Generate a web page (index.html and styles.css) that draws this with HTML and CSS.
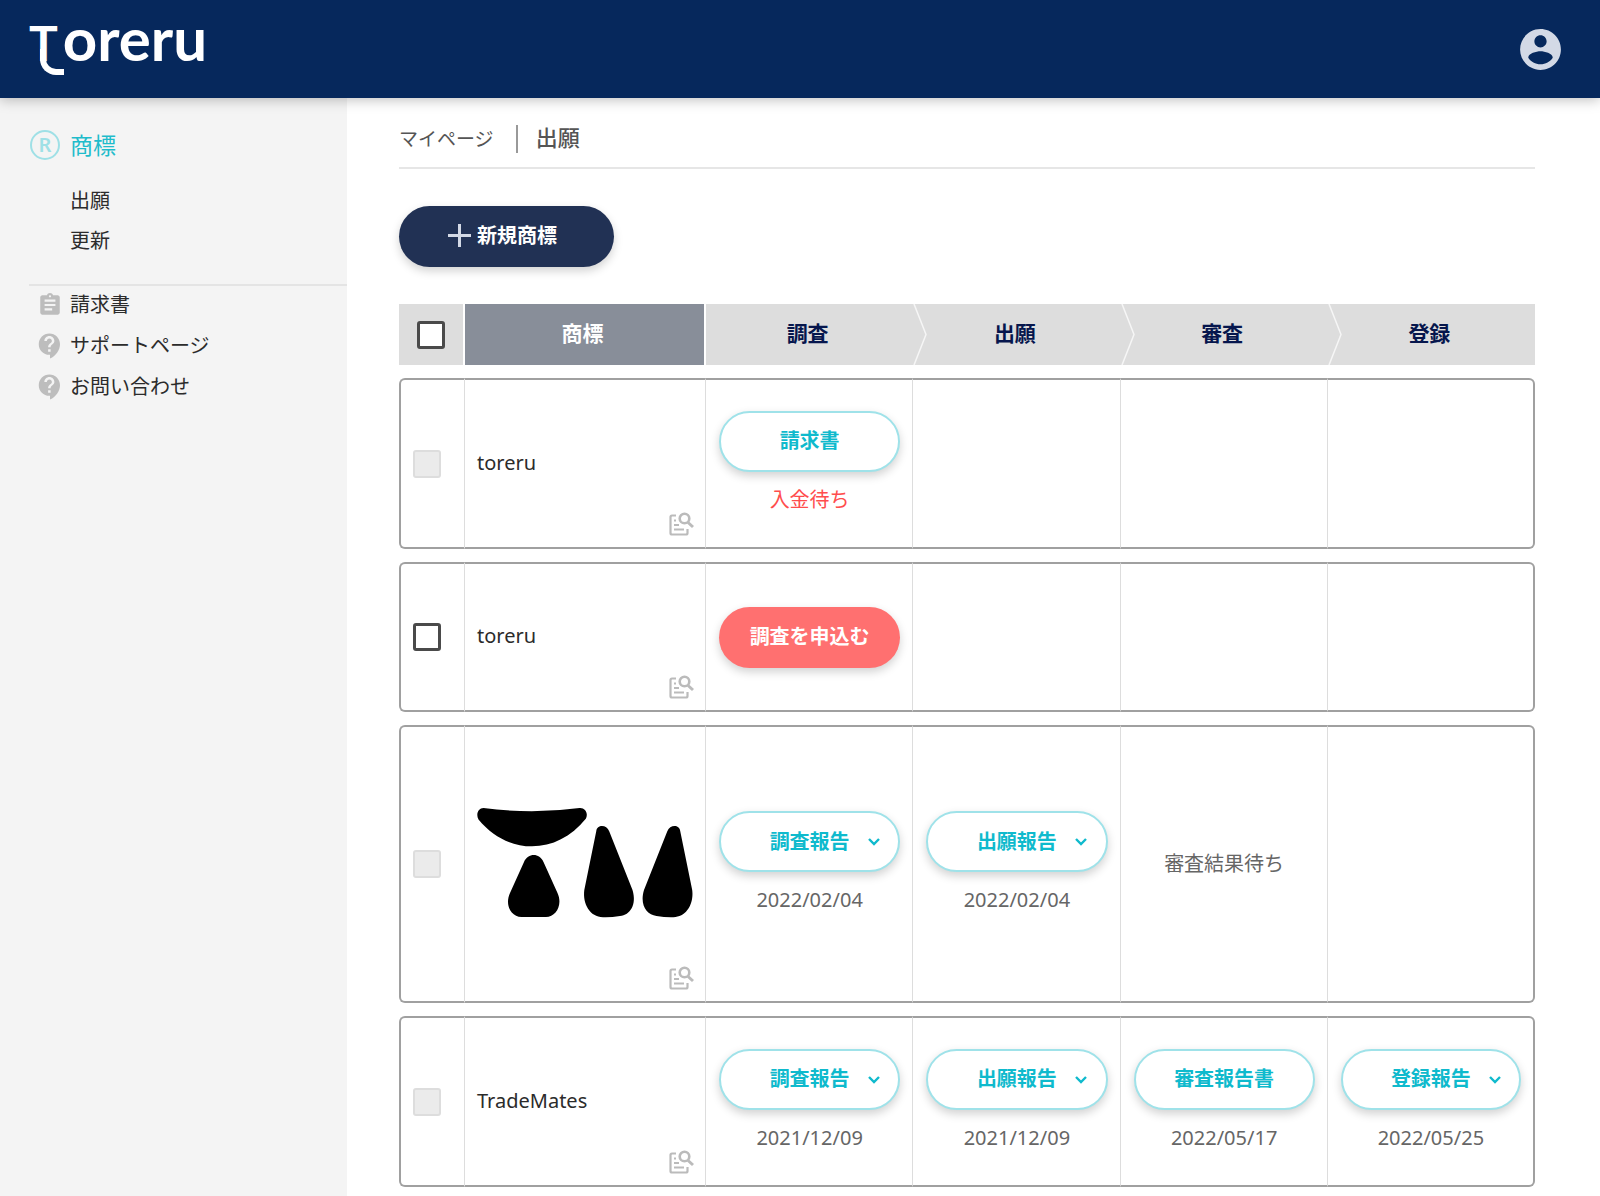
FILE: index.html
```html
<!DOCTYPE html>
<html lang="ja">
<head>
<meta charset="utf-8">
<meta name="viewport" content="width=device-width, initial-scale=1">
<title>Toreru</title>
<link rel="stylesheet" href="styles.css">
</head>
<body>
<svg class="sprite" aria-hidden="true">
  <symbol id="doc-search" viewBox="0 0 25 24">
    <g fill="none" stroke="currentColor" stroke-width="2.200">
      <path d="M7 3.500H3A1.500 1.500 0 0 0 1.500 5V21A1.500 1.500 0 0 0 3 22.500H17A1.500 1.500 0 0 0 18.500 21V17"/>
      <circle cx="15.500" cy="6.500" r="4.800" stroke-width="2.600"/>
      <path d="M19 10.500L24 15" stroke-width="3"/>
      <path d="M5 8.500H7M5 13H10M5 17.500H15" stroke-width="1.800"/>
    </g>
  </symbol>
  <symbol id="chevron" viewBox="0 0 14 9">
    <path d="M2 2L7 7L12 2" fill="none" stroke="currentColor" stroke-width="2.400"/>
  </symbol>
  <symbol id="support" viewBox="0 0 24 24">
    <path fill="currentColor" d="M11.500 2C6.810 2 3 5.810 3 10.500S6.810 19 11.500 19h.5v3c4.860-2.340 8-7 8-11.500C20 5.810 16.190 2 11.500 2zm1 14.500h-2v-2h2v2zm0-3.500h-2c0-3.250 3-3 3-5 0-1.100-.9-2-2-2s-2 .9-2 2h-2c0-2.210 1.790-4 4-4s4 1.790 4 4c0 2.500-3 2.750-3 5z"/>
  </symbol>
  <symbol id="step" viewBox="0 0 14 61" preserveAspectRatio="none">
    <path d="M1 0L13 30.500L1 61" fill="none" stroke="#f6f6f6" stroke-width="1.500"/>
  </symbol>
</svg>

<header class="topbar">
  <a class="logo" href="#"><span class="logo-cap">T</span>oreru</a>
  <button class="account" type="button" aria-label="アカウント">
    <svg viewBox="0 0 24 24" width="49" height="49"><path fill="currentColor" d="M12 2C6.480 2 2 6.480 2 12s4.480 10 10 10 10-4.480 10-10S17.520 2 12 2zm0 3c1.660 0 3 1.340 3 3s-1.340 3-3 3-3-1.340-3-3 1.340-3 3-3zm0 14.200c-2.500 0-4.710-1.280-6-3.220.03-1.990 4-3.080 6-3.080 1.990 0 5.970 1.090 6 3.080-1.290 1.940-3.500 3.220-6 3.220z"/></svg>
  </button>
</header>

<div class="layout">
  <nav class="sidebar">
    <a class="section" href="#">
      <svg viewBox="0 0 32 32" width="32" height="32"><circle cx="16" cy="16" r="14" fill="none" stroke="currentColor" stroke-width="2"/><text x="16" y="23" text-anchor="middle" class="reg">R</text></svg>
      商標
    </a>
    <ul class="sub">
      <li><a href="#">出願</a></li>
      <li><a href="#">更新</a></li>
    </ul>
    <ul class="links">
      <li><a href="#"><svg viewBox="0 0 24 24" width="26" height="26"><path fill="currentColor" d="M19 3h-4.180C14.400 1.840 13.300 1 12 1s-2.400.84-2.820 2H5c-1.100 0-2 .9-2 2v14c0 1.100.9 2 2 2h14c1.100 0 2-.9 2-2V5c0-1.100-.9-2-2-2zm-7 0c.55 0 1 .45 1 1s-.45 1-1 1-1-.45-1-1 .45-1 1-1zm2 14H7v-2h7v2zm3-4H7v-2h10v2zm0-4H7V7h10v2z"/></svg>請求書</a></li>
      <li><a href="#"><svg width="30" height="30"><use href="#support"/></svg>サポートページ</a></li>
      <li><a href="#"><svg width="30" height="30"><use href="#support"/></svg>お問い合わせ</a></li>
    </ul>
  </nav>

  <main class="main">
    <div class="crumbs">
      <a href="#">マイページ</a>
      <h1>出願</h1>
    </div>
    <button class="pill new" type="button">
      <svg viewBox="0 0 23 23" width="23" height="23"><path d="M11.500 0V23M0 11.500H23" stroke="#d3d9e6" stroke-width="3"/></svg>
      新規商標
    </button>

    <table class="marks">
      <colgroup><col class="col-check"><col class="col-mark"><col><col><col><col></colgroup>
      <thead>
        <tr>
          <th class="all"><input type="checkbox" aria-label="すべて選択"></th>
          <th class="name">商標</th>
          <th>調査</th>
          <th><svg class="step"><use href="#step"/></svg>出願</th>
          <th><svg class="step"><use href="#step"/></svg>審査</th>
          <th><svg class="step"><use href="#step"/></svg>登録</th>
        </tr>
      </thead>
      <tbody>
        <tr>
          <td class="check"><input type="checkbox" aria-label="toreru" disabled></td>
          <td class="mark">toreru<a class="detail" href="#" aria-label="詳細"><svg width="25" height="24"><use href="#doc-search"/></svg></a></td>
          <td><button class="pill line" type="button">請求書</button><p class="note wait">入金待ち</p></td>
          <td></td>
          <td></td>
          <td></td>
        </tr>
        <tr class="short">
          <td class="check"><input type="checkbox" aria-label="toreru"></td>
          <td class="mark">toreru<a class="detail" href="#" aria-label="詳細"><svg width="25" height="24"><use href="#doc-search"/></svg></a></td>
          <td><button class="pill apply" type="button">調査を申込む</button></td>
          <td></td>
          <td></td>
          <td></td>
        </tr>
        <tr>
          <td class="check"><input type="checkbox" aria-label="図形商標" disabled></td>
          <td class="mark">
            <svg class="figure" viewBox="0 0 216 216" role="img" aria-label="図形商標">
              <path d="M6.500 53Q55 59.500 102.500 53C108 52.500 111.500 58 109 63.500C94 82 75 91.300 55 91.300S16 82 1.500 64.500C-1.500 59 1.500 53 6.500 53Z"/>
              <path d="M47 107C51 97.700 62.500 97.700 66.500 107L80.500 138C86 150 79 162 69 162H44.500C34 162 27.500 150 33 138Z"/>
              <path d="M119.300 76C120 69.500 129.500 69 132.300 76.500L155.500 135C160 150 153 160 143 161Q134 162.600 126 162.300C113 162 105.500 149 107.300 135Z"/>
              <path d="M203.200 76C202.500 69.500 193 69 190.200 76.500L167 135C162.500 150 169.500 160 179.500 161Q188.500 162.600 196.500 162.300C209.500 162 217 149 215.200 135Z"/>
            </svg>
            <a class="detail" href="#" aria-label="詳細"><svg width="25" height="24"><use href="#doc-search"/></svg></a>
          </td>
          <td><button class="pill line menu" type="button"><span>調査報告</span><svg width="14" height="9"><use href="#chevron"/></svg></button><p class="note">2022/02/04</p></td>
          <td><button class="pill line menu" type="button"><span>出願報告</span><svg width="14" height="9"><use href="#chevron"/></svg></button><p class="note">2022/02/04</p></td>
          <td><p>審査結果待ち</p></td>
          <td></td>
        </tr>
        <tr>
          <td class="check"><input type="checkbox" aria-label="TradeMates" disabled></td>
          <td class="mark">TradeMates<a class="detail" href="#" aria-label="詳細"><svg width="25" height="24"><use href="#doc-search"/></svg></a></td>
          <td><button class="pill line menu" type="button"><span>調査報告</span><svg width="14" height="9"><use href="#chevron"/></svg></button><p class="note">2021/12/09</p></td>
          <td><button class="pill line menu" type="button"><span>出願報告</span><svg width="14" height="9"><use href="#chevron"/></svg></button><p class="note">2021/12/09</p></td>
          <td><button class="pill line" type="button">審査報告書</button><p class="note">2022/05/17</p></td>
          <td><button class="pill line menu" type="button"><span>登録報告</span><svg width="14" height="9"><use href="#chevron"/></svg></button><p class="note">2022/05/25</p></td>
        </tr>
      </tbody>
    </table>
  </main>
</div>
</body>
</html>
```
FILE: styles.css
```css
* { box-sizing: border-box; }

body {
  margin: 0;
  min-height: 100vh;
  display: flex;
  flex-direction: column;
  font: 20px/28px "Noto Sans", "Noto Sans CJK JP", sans-serif;
  color: #2b2b2b;
  background: #fff;
}

a { color: inherit; text-decoration: none; }
ul { margin: 0; padding: 0; list-style: none; }
p { margin: 0; }
button { font: inherit; border: 0; cursor: pointer; }
svg { display: block; flex: none; }
.sprite { position: absolute; width: 0; height: 0; }

.topbar {
  display: flex;
  justify-content: space-between;
  align-items: center;
  height: 98px;
  padding: 0 35px 0 29px;
  background: #06285c;
  box-shadow: 0 2px 12px rgba(0, 0, 0, .25);
  z-index: 1;
}

.logo {
  position: relative;
  display: flex;
  align-items: baseline;
  gap: 5px;
  padding-bottom: 18px;
  color: #fff;
  font: 700 60px/60px Lato, sans-serif;
}
.logo-cap { font-size: 48px; }
/* tail that curls under the stem of the capital */
.logo::after {
  content: "";
  position: absolute;
  left: 11px;
  bottom: 16px;
  width: 18px;
  height: 20px;
  border: solid #fff;
  border-width: 0 0 6px 6px;
  border-bottom-left-radius: 16px;
}

.account { padding: 0; background: none; color: #d3d9e6; }

.layout { display: flex; flex: 1; }

.sidebar {
  flex: none;
  width: 347px;
  padding: 30px 0 0 29px;
  background: #f4f4f4;
}
.section {
  display: flex;
  align-items: center;
  gap: 9px;
  height: 34px;
  font-size: 23px;
  color: #1fbccb;
}
.section svg { color: #9fe0e6; }
.reg { font: 600 20px "Noto Sans", sans-serif; fill: currentColor; }
.sub {
  padding: 19px 0 23px 41px;
  border-bottom: 2px solid #e4e4e4;
}
.sub li { line-height: 40px; }
.links { margin-top: -2px; }
.links a {
  display: grid;
  grid-template-columns: 41px 1fr;
  align-items: center;
  height: 41px;
}
.links svg { justify-self: center; color: #bdbdbd; }

.main { flex: 1; min-width: 0; padding: 0 65px 0 52px; }

.crumbs {
  display: flex;
  align-items: center;
  height: 71px;
  padding-top: 12px;
  border-bottom: 2px solid #e6e6e6;
  color: #555;
}
.crumbs a { padding-right: 22px; font-size: 19px; }
.crumbs h1 {
  margin: 0;
  padding: 0 0 4px 18px;
  border-left: 2px solid #999;
  font-size: 22px;
  line-height: 24px;
  font-weight: 500;
}

.pill {
  display: block;
  width: 100%;
  height: 61px;
  padding: 0;
  border-radius: 31px;
  font-weight: 700;
  box-shadow: 0 4px 10px rgba(0, 0, 0, .18);
}
.new {
  display: flex;
  align-items: center;
  gap: 6px;
  width: 215px;
  margin-top: 37px;
  padding: 0 0 2px 49px;
  background: #213154;
  color: #fff;
}
.line { background: #fff; border: 2px solid #9fe2e9; color: #0fbacd; }
.apply { background: #ff7070; color: #fff; }
.menu {
  display: grid;
  grid-template-columns: 1fr auto 1fr;
  align-items: center;
}
.menu span { grid-column: 2; }
.menu svg { justify-self: center; }

.marks {
  width: 100%;
  margin: 24px 0 -13px;
  table-layout: fixed;
  border-collapse: separate;
  border-spacing: 0 13px;
}
.col-check { width: 66px; }
.col-mark { width: 241px; }

th {
  position: relative;
  height: 61px;
  padding: 0 4px 4px 0;
  background: #ddd;
  color: #06164d;
  font-size: 21px;
}
.all, .name { border-right: 2px solid #fff; }
.all { padding: 0; }
.name { background: #888e99; color: #fff; }
.step {
  position: absolute;
  left: 0;
  top: 0;
  width: 14px;
  height: 100%;
}

td {
  height: 171px;
  padding: 0 12px 0 13px;
  border: solid #a0a0a0;
  border-width: 2px 0;
  border-right: 1px solid #ddd;
  text-align: center;
  color: #666;
}
.short td { height: 150px; }
td:first-child { border-left: 2px solid #a0a0a0; border-radius: 6px 0 0 6px; }
td:last-child { border-right: 2px solid #a0a0a0; border-radius: 0 6px 6px 0; }
.check { padding: 0 12px; text-align: left; }
.mark {
  position: relative;
  padding: 28px 12px 30px;
  text-align: left;
  color: #2b2b2b;
}
.figure { width: 100%; }
.detail { position: absolute; right: 11px; bottom: 11px; color: #bbb; }
.note { margin-top: 11px; line-height: 34px; }
.wait { color: #ff4d4d; }

input[type="checkbox"] {
  appearance: none;
  display: block;
  width: 28px;
  height: 28px;
  margin: 0;
  border: 3px solid #4a4a4a;
  border-radius: 3px;
  background: #fff;
}
input[type="checkbox"]:disabled { border: 2px solid #ddd; background: #ebebeb; }
.all input { margin: auto; }
```
